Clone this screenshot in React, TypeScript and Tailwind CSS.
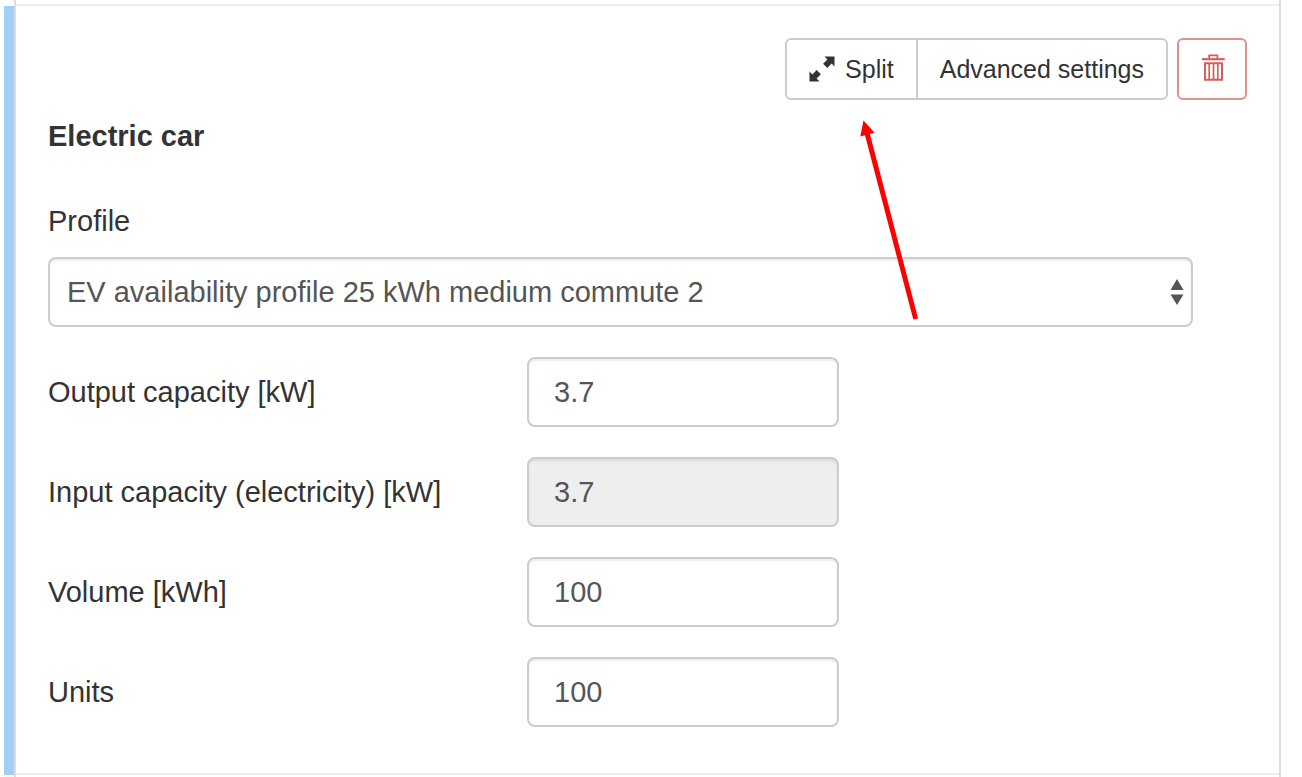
import { useState } from 'react';

const control =
  'h-[70px] w-full rounded-lg border-2 border-[#ccc] text-[29px] leading-10 text-[#555] shadow-[inset_0_2px_2px_rgba(0,0,0,0.075)] outline-none focus:border-[#66afe9]';

function ExpandIcon() {
  return (
    <svg aria-hidden="true" viewBox="0 0 26 26" className="size-[26px] fill-[#333]">
      <path d="M15.5 0.5H25.5V10.5l-2.9-2.9-4.3 4.3-4.2-4.2 4.3-4.3z" />
      <path d="M10.5 25.5H0.5V15.5l2.9 2.9 4.3-4.3 4.2 4.2-4.3 4.3z" />
    </svg>
  );
}

function TrashIcon() {
  return (
    <svg aria-hidden="true" viewBox="0 0 26 30" className="h-[30px] w-[26px] fill-none stroke-[#d2605a]">
      <path d="M3 5.2h22.7" strokeWidth="2.2" />
      <path d="M10.2 5V1.3h8.2V5" strokeWidth="1.8" />
      <path d="M6 9.2h17v16.6H6z" strokeWidth="2" />
      <path d="M10.2 10v15M14.5 10v15M18.8 10v15" strokeWidth="1.7" />
    </svg>
  );
}

function NumberField({ id, label, initial, disabled = false }: { id: string; label: string; initial: string; disabled?: boolean }) {
  const [value, setValue] = useState(initial);
  return (
    <div className="grid grid-cols-[479fr_312fr_354fr] items-center">
      <label htmlFor={id} className="whitespace-nowrap">{label}</label>
      <input
        id={id}
        type="text"
        inputMode="decimal"
        value={value}
        disabled={disabled}
        onChange={(e) => setValue(e.target.value)}
        className={`${control} px-[25px] disabled:bg-[#eee]`}
      />
    </div>
  );
}

export default function App() {
  return (
    <main className="min-h-screen bg-white pr-[21px] pl-1 font-['Liberation_Sans',Arial,sans-serif] text-[29px] leading-10 text-[#333]">
      <div className="ml-[10px] h-1 border-x-2 border-[#ddd]" />
      <section className="flex">
        <div className="mt-[2px] w-[10px] shrink-0 bg-[#a2cff8]" />
        <div className="min-w-0 grow border-x-2 border-[#ddd]">
          <div className="relative border-y-2 border-[#eee] pt-8 pr-8 pb-[46px] pl-8">
            <div className="flex justify-end gap-[9px] text-[25px]">
              <div className="flex">
                <button type="button" className="flex h-[62px] items-center gap-[10px] rounded-l-md border-2 border-[#ccc] px-[22px]">
                  <ExpandIcon />
                  Split
                </button>
                <button type="button" className="-ml-[2px] h-[62px] rounded-r-md border-2 border-[#ccc] px-[22px] whitespace-nowrap">
                  Advanced settings
                </button>
              </div>
              <button type="button" aria-label="Delete" className="flex h-[62px] w-[70px] items-center justify-center rounded-md border-2 border-[#e2908a]">
                <TrashIcon />
              </button>
            </div>

            <h2 className="mt-4 font-bold">Electric car</h2>

            <form className="mt-[45px] flex flex-col gap-[30px] pr-[54px]">
              <div className="flex flex-col gap-4">
                <label htmlFor="profile">Profile</label>
                <div className="relative">
                  <select id="profile" className={`${control} appearance-none bg-white px-[17px]`}>
                    <option>EV availability profile 25 kWh medium commute 2</option>
                  </select>
                  <svg aria-hidden="true" viewBox="0 0 14 26" className="pointer-events-none absolute top-[22px] right-[9px] h-[26px] w-[14px] fill-[#555]">
                    <path d="M7 0l6.5 11H.5zM7 26L.5 15.5h13z" />
                  </svg>
                </div>
              </div>
              <NumberField id="output" label="Output capacity [kW]" initial="3.7" />
              <NumberField id="input" label="Input capacity (electricity) [kW]" initial="3.7" disabled />
              <NumberField id="volume" label="Volume [kWh]" initial="100" />
              <NumberField id="units" label="Units" initial="100" />
            </form>

            <svg aria-hidden="true" viewBox="0 0 60 200" className="pointer-events-none absolute top-[114px] right-[359px] h-[200px] w-[60px] fill-[#ff0000]">
              <path d="M3.5 0.5L14.5 12.8L9.9 14L58.1 198.4L53.3 199.6L5 15.3L0.3 16.5z" />
            </svg>
          </div>
        </div>
      </section>
      <div className="ml-[10px] h-[2px] border-x-2 border-[#ddd]" />
    </main>
  );
}
